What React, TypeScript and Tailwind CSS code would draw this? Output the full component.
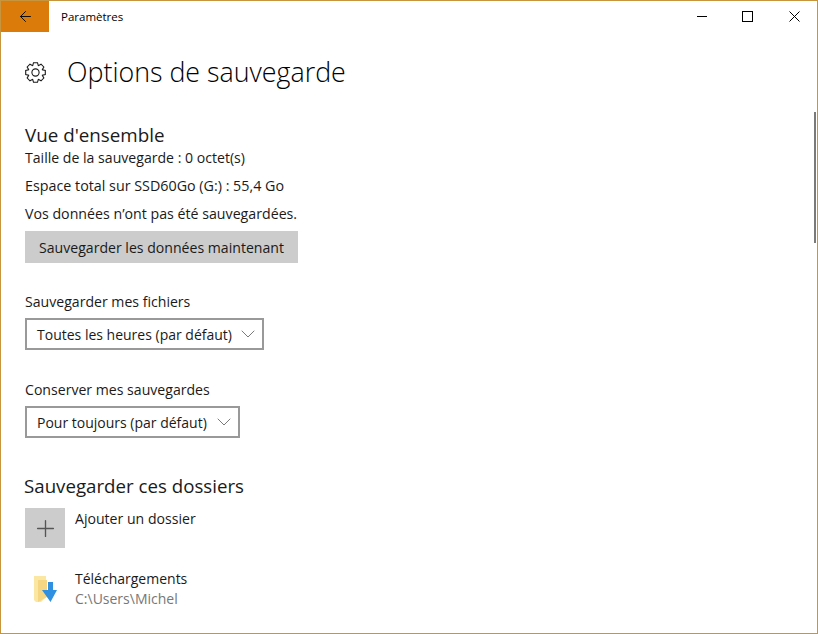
import { ArrowLeft, ChevronDown, Plus } from "lucide-react";

function Dropdown({ label, value, width }: { label: string; value: string; width: string }) {
  return (
    <div>
      <p className="text-[14.1px] leading-5 text-[#1a1a1a]">{label}</p>
      <div className={`mt-[6px] flex h-8 items-center justify-between border-2 border-[#999999] pl-[10px] pr-[2px] text-[14px] text-[#1a1a1a] ${width}`}>
        <span>{value}</span>
        <ChevronDown className="h-6 w-6 text-[#7a7a7a]" strokeWidth={1} absoluteStrokeWidth />
      </div>
    </div>
  );
}

function GearIcon() {
  // 8 dents, contour calcule autour du centre
  const pts: string[] = [];
  for (let i = 0; i < 8; i++) {
    const a = (i * Math.PI) / 4;
    [
      [-0.39, 7.4],
      [-0.2, 10],
      [0.2, 10],
      [0.39, 7.4],
    ].forEach(([da, r]) => {
      pts.push(`${(10.5 + r * Math.sin(a + da)).toFixed(2)},${(10.5 - r * Math.cos(a + da)).toFixed(2)}`);
    });
  }
  return (
    <svg width="21" height="21" viewBox="0 0 21 21" fill="none" stroke="#1a1a1a" strokeWidth="1.1">
      <polygon points={pts.join(" ")} strokeLinejoin="miter" />
      <circle cx="10.5" cy="10.5" r="3.6" />
    </svg>
  );
}

function FolderIcon() {
  return (
    <svg width="24" height="28" viewBox="0 0 24 28">
      <path d="M1 1 H13 V5 H14 V21 L8 27 H3 L1 25 Z" fill="#fbe6a2" />
      <path d="M5 5 H14 V22 L5 27 Z" fill="#f5d682" />
      <path d="M15 7 H20 V15 H24 L17.5 27 L9 15 H15 Z" fill="#2f8fe0" />
    </svg>
  );
}

export default function App() {
  return (
    <div className="relative flex h-[634px] w-[818px] flex-col overflow-hidden border border-[#c8953f] bg-white font-['Open_Sans',sans-serif] text-[#1a1a1a]">
      <header className="flex h-[31px] shrink-0 items-center">
        <div className="flex h-[31px] w-12 items-center justify-center bg-[#db7c0a]">
          <ArrowLeft className="h-[17px] w-[17px] text-black" strokeWidth={1.3} absoluteStrokeWidth />
        </div>
        <span className="ml-3 text-[11.5px] text-black">Paramètres</span>
        <div className="ml-auto flex items-center">
          <div className="flex h-[31px] w-[46px] items-center justify-center">
            <div className="h-px w-[10px] bg-black" />
          </div>
          <div className="flex h-[31px] w-[46px] items-center justify-center">
            <div className="-ml-px h-[11px] w-[11px] border border-black" />
          </div>
          <div className="flex h-[31px] w-[46px] items-center justify-center">
            <svg width="11" height="11" viewBox="0 0 11 11" stroke="#000" strokeWidth="1">
              <path d="M0.5 0.5 L10.5 10.5 M10.5 0.5 L0.5 10.5" />
            </svg>
          </div>
        </div>
      </header>

      <main className="flex flex-col pl-6 pt-[21px]">
        <div className="flex items-center gap-[21px]">
          <GearIcon />
          <h1 className="text-[26.8px] font-light leading-[38px] text-black">Options de sauvegarde</h1>
        </div>

        <h2 className="mt-[32px] text-[18.8px] leading-[24px]">Vue d'ensemble</h2>
        <div className="mt-px text-[14.1px] leading-5">
          <p>Taille de la sauvegarde : 0 octet(s)</p>
          <p className="mt-2 text-[14.3px]">Espace total sur SSD60Go (G:) : 55,4 Go</p>
          <p className="mt-2 text-[14.2px]">Vos données n’ont pas été sauvegardées.</p>
        </div>
        <button className="mt-[7px] h-8 w-[273px] bg-[#cccccc] pt-px text-[14.1px] text-[#1a1a1a]">
          Sauvegarder les données maintenant
        </button>

        <div className="mt-[29px]">
          <Dropdown label="Sauvegarder mes fichiers" value="Toutes les heures (par défaut)" width="w-[239px]" />
        </div>
        <div className="mt-[30px]">
          <Dropdown label="Conserver mes sauvegardes" value="Pour toujours (par défaut)" width="w-[215px]" />
        </div>

        <h2 className="-ml-px mt-[36px] text-[18.7px] leading-[24px]">Sauvegarder ces dossiers</h2>
        <div className="mt-[10px] flex items-start gap-[10px]">
          <div className="flex h-10 w-10 items-center justify-center bg-[#cccccc]">
            <Plus className="h-[27px] w-[27px] text-[#555555]" strokeWidth={1.2} absoluteStrokeWidth />
          </div>
          <span className="pt-px text-[14.1px] leading-5">Ajouter un dossier</span>
        </div>
        <div className="mt-[21px] flex items-center gap-[10px]">
          <div className="flex h-10 w-10 items-center justify-center">
            <FolderIcon />
          </div>
          <div className="text-[14px] leading-5">
            <p>Téléchargements</p>
            <p className="text-[#777777]">C:\Users\Michel</p>
          </div>
        </div>
      </main>

      {/* barre de defilement */}
      <div className="absolute right-[1px] top-[111px] h-[131px] w-[2px] bg-[#7a7a7a]" />
    </div>
  );
}
